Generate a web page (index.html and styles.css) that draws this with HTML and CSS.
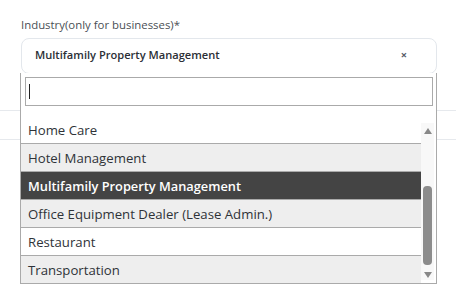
FILE: index.html
```html
<!DOCTYPE html>
<html>
    <head>
        <meta charset="utf-8" />
        <title>Industry select</title>
        <meta name="viewport" content="width=device-width, initial-scale=1.0" />
        <link rel="stylesheet" href="styles.css">
    </head>

    <body>
        <main class="form">
            <div class="field">
                <label class="field-label">Industry(only for businesses)*</label>
                <div class="select">
                    <span class="select-value">Multifamily Property Management</span>
                    <span class="select-clear">×</span>
                </div>

                <div class="dropdown">
                    <div class="search">
                        <div class="search-input"><span class="caret"></span></div>
                    </div>
                    <div class="results">
                        <ul class="options">
                            <li>Home Care</li>
                            <li class="alt">Hotel Management</li>
                            <li class="active">Multifamily Property Management</li>
                            <li class="alt">Office Equipment Dealer (Lease Admin.)</li>
                            <li>Restaurant</li>
                            <li class="alt">Transportation</li>
                        </ul>
                        <div class="scrollbar">
                            <span class="arrow up"></span>
                            <span class="thumb"></span>
                            <span class="arrow down"></span>
                        </div>
                    </div>
                </div>
            </div>

            <div class="backdrop">
                <div class="backdrop-row"></div>
                <div class="backdrop-row"></div>
            </div>
        </main>
    </body>
</html>
```

FILE: styles.css
```css
body {
    margin: 0;
    font-family: "Open Sans", "Liberation Sans", sans-serif;
    background: #fff;
}

.form {
    width: 456px;
    min-height: 303px;
}

.field {
    position: relative;
    padding: 17px 19px 0 21px;
}

.field-label {
    display: block;
    font-size: 11.4px;
    line-height: 15px;
    color: #4a4f55;
    margin-bottom: 6px;
}

.select {
    display: flex;
    align-items: center;
    justify-content: space-between;
    box-sizing: border-box;
    height: 36px;
    padding: 0 29px 3px 13px;
    border: 1px solid #e3e7ec;
    border-radius: 8px;
    background: #fff;
}

.select-value {
    font-size: 11.1px;
    font-weight: 600;
    color: #2b2f36;
}

.select-clear {
    font-size: 11px;
    font-weight: 700;
    color: #555a66;
}

.dropdown {
    position: absolute;
    z-index: 2;
    top: 73px;
    left: 20px;
    width: 417px;
    box-sizing: border-box;
    border: 1px solid #aaa;
    border-top: none;
    background: #fff;
}

.search {
    padding: 4px 3px 4px 4px;
}

.search-input {
    display: flex;
    align-items: center;
    box-sizing: border-box;
    height: 29px;
    padding-left: 3px;
    border: 1px solid #aaa;
}

.caret {
    width: 1px;
    height: 15px;
    background: #222;
}

.results {
    display: flex;
    margin-top: 6px;
}

.options {
    flex: 1;
    margin: 0;
    padding: 0;
    list-style: none;
}

.options li {
    height: 27px;
    padding-left: 7px;
    border-bottom: 1px solid #aaa;
    font-size: 13.2px;
    line-height: 28px;
    color: #2f3338;
    white-space: nowrap;
}

.options li.alt {
    background: #eee;
}

.options li.active {
    background: #444;
    color: #fff;
    font-size: 12.8px;
    font-weight: 600;
}

.options li:last-child {
    border-bottom: none;
}

.scrollbar {
    display: flex;
    flex-direction: column;
    align-items: center;
    width: 13px;
    margin: 7px 2px 3px 0;
    background: #f8f8f8;
}

.arrow {
    width: 0;
    height: 0;
    border-left: 4.5px solid transparent;
    border-right: 4.5px solid transparent;
}

.arrow.up {
    margin-top: 5px;
    border-bottom: 6px solid #888;
}

.arrow.down {
    margin-bottom: 2px;
    border-top: 6px solid #888;
}

.thumb {
    width: 9px;
    height: 79px;
    margin: 52px 0 7px;
    border-radius: 4px;
    background: #8c8c8c;
}

.backdrop {
    margin-top: 8px;
}

.backdrop-row {
    height: 28px;
    border-bottom: 1px solid #e6e9ed;
}
```
